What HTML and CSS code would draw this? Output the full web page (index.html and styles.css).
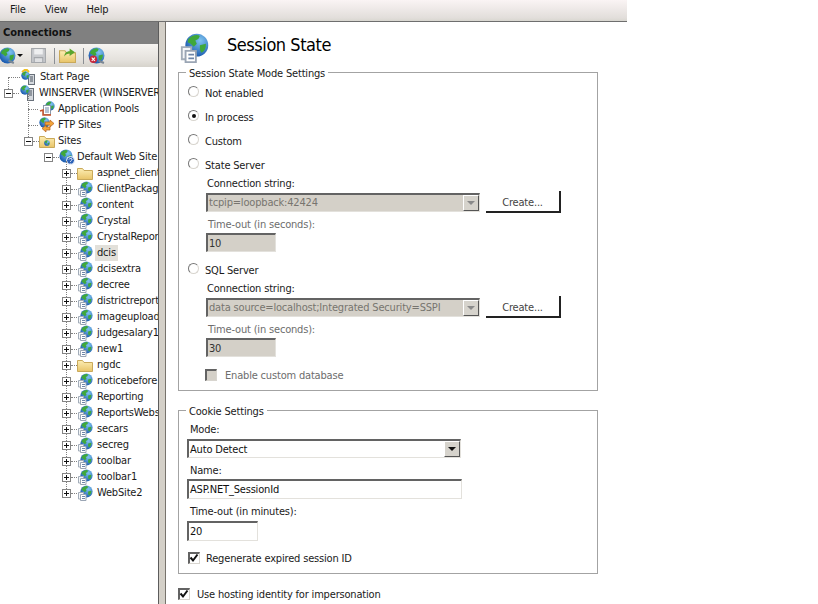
FILE: index.html
```html
<!DOCTYPE html>
<html lang="en">
<head>
    <meta charset="UTF-8">
    <title>Session State</title>
    <link rel="stylesheet" href="styles.css">
</head>
<body>
    <!-- shared icons -->
    <svg class="icon-defs" aria-hidden="true">
        <defs>
            <radialGradient id="sea" cx="0.65" cy="0.3" r="0.8">
                <stop offset="0" stop-color="#7fc4f0"/>
                <stop offset="1" stop-color="#0f4fa8"/>
            </radialGradient>
            <linearGradient id="manila" x1="0" y1="0" x2="0" y2="1">
                <stop offset="0" stop-color="#fdeeb4"/>
                <stop offset="1" stop-color="#e8c468"/>
            </linearGradient>
            <symbol id="globe" viewBox="0 0 16 16">
                <circle cx="8" cy="8" r="7.5" fill="url(#sea)"/>
                <path d="M5 2c2-1 4-1 5 0l-1 2-2 1 1 2-2 2-2-2-2-1c0-2 1-3 3-4z" fill="#3fa83a"/>
                <path d="M10 8l4-1c0 3-1 5-3 6l-1-2z" fill="#3fa83a"/>
            </symbol>
            <symbol id="site" viewBox="0 0 16 16">
                <use href="#globe" x="3" y="0" width="13" height="13"/>
                <path d="M1.500 7.500h5v6.500h-5z" fill="#f4f6f8" stroke="#a3adb9"/>
                <path d="M3.500 9.500h5.500v6h-5.500z" fill="#fff" stroke="#9aa5b4"/>
                <path d="M5 11.500h3M5 13.500h3" stroke="#6f86a8"/>
            </symbol>
            <symbol id="folder" viewBox="0 0 16 16">
                <path d="M.5 3.500h5l1.500 2h8.500v9h-15z" fill="url(#manila)" stroke="#c9a95a"/>
            </symbol>
            <symbol id="server" viewBox="0 0 16 16">
                <rect x="8.500" y="3.500" width="6" height="12" fill="#d5d9de" stroke="#68707a"/>
                <path d="M10 6h3M10 8h3M10 10h3" stroke="#4b5560"/>
                <use href="#globe" x="1" y="0" width="10" height="10"/>
            </symbol>
            <symbol id="homepage" viewBox="0 0 16 16">
                <rect x="8.500" y="5.500" width="6" height="10" fill="#d5d9de" stroke="#68707a"/>
                <path d="M10 8h3M10 10h3M10 12h3" stroke="#4b5560"/>
                <use href="#globe" x="1" y="2" width="9" height="9"/>
                <path d="M2 3l4-3 3 3" fill="none" stroke="#f0c020" stroke-width="2"/>
            </symbol>
            <symbol id="pools" viewBox="0 0 16 16">
                <use href="#globe" x="6" y="0" width="10" height="10"/>
                <rect x="4.500" y="4.500" width="7" height="9" fill="#fff" stroke="#8a97a8"/>
                <path d="M6 7h4M6 9h4M6 11h4" stroke="#6f86a8"/>
                <path d="M1 10l3-1v5h8" fill="none" stroke="#c8522a" stroke-width="1.500"/>
            </symbol>
            <symbol id="ftp" viewBox="0 0 16 16">
                <use href="#globe" x="0" y="0" width="11" height="11"/>
                <path d="M6 5h5V3l4 3.500-4 3.500V8H6z" fill="#f2a53a" stroke="#b5601c" stroke-width=".7"/>
                <path d="M10 9H6V7L2 10.500 6 14v-2h4z" fill="#f2a53a" stroke="#b5601c" stroke-width=".7" transform="translate(1 1)"/>
            </symbol>
            <symbol id="sites" viewBox="0 0 16 16">
                <path d="M.5 3.500h5l1.500 2h8.500v9h-15z" fill="url(#manila)" stroke="#c9a95a"/>
                <use href="#globe" x="5" y="7" width="6" height="6"/>
            </symbol>
            <symbol id="webroot" viewBox="0 0 16 16">
                <use href="#globe" width="14" height="14"/>
                <circle cx="11.500" cy="11.500" r="4" fill="#2c62b8" stroke="#fff"/>
                <path d="M10 10.500c.5-1.500 3-1.500 3 0 0 1-1.500 1-1.500 2.200M11.500 14v.5" fill="none" stroke="#fff"/>
            </symbol>
        </defs>
    </svg>

    <div class="app">
        <nav class="menu-bar">
            <span>File</span>
            <span>View</span>
            <span>Help</span>
        </nav>

        <div class="panes">
            <aside class="connections">
                <h2 class="pane-title">Connections</h2>
                <div class="toolbar">
                    <svg class="tool-icon" viewBox="0 0 16 16"><use href="#globe"/><path d="M9 13l5 2" stroke="#7b8794" stroke-width="2"/></svg>
                    <span class="drop-arrow"></span>
                    <svg class="tool-icon save" viewBox="0 0 16 16">
                        <path d="M1.500 1.500h13v13h-13z" fill="#c9cbce" stroke="#a4a7ab"/>
                        <path d="M4 2h8v5H4z" fill="#eeeff0"/>
                        <path d="M4 10h8v4.500H4z" fill="#dfe0e2" stroke="#a4a7ab"/>
                    </svg>
                    <span class="tool-sep"></span>
                    <svg class="tool-icon" viewBox="0 0 16 16">
                        <use href="#folder"/>
                        <path d="M5 9c0-3 2-5 5-5V1.500L15 5l-5 3.500V6c-2 0-4 1-5 3z" fill="#5aa62e"/>
                    </svg>
                    <span class="tool-sep"></span>
                    <svg class="tool-icon" viewBox="0 0 16 16">
                        <use href="#globe"/>
                        <circle cx="5" cy="11.500" r="3.500" fill="#c8283c"/>
                        <path d="M3.500 10l3 3m0-3l-3 3" stroke="#fff"/>
                        <path d="M10 13l5 2" stroke="#7b8794" stroke-width="2"/>
                    </svg>
                </div>

                <div class="tree">
                    <div class="node lvl-0 top-leaf"><svg class="node-icon"><use href="#homepage"/></svg><span class="node-label">Start Page</span></div>
                    <div class="node lvl-0"><span class="expander open"></span><svg class="node-icon"><use href="#server"/></svg><span class="node-label">WINSERVER (WINSERVER)</span></div>
                    <div class="branch branch-server">
                        <div class="node lvl-1 leaf"><svg class="node-icon"><use href="#pools"/></svg><span class="node-label">Application Pools</span></div>
                        <div class="node lvl-1 leaf"><svg class="node-icon"><use href="#ftp"/></svg><span class="node-label">FTP Sites</span></div>
                        <div class="node lvl-1"><span class="expander open"></span><svg class="node-icon"><use href="#sites"/></svg><span class="node-label">Sites</span></div>
                    </div>
                    <div class="node lvl-2"><span class="expander open"></span><svg class="node-icon"><use href="#webroot"/></svg><span class="node-label">Default Web Site</span></div>
                    <div class="branch branch-root">
                        <div class="node lvl-3"><span class="expander"></span><svg class="node-icon"><use href="#folder"/></svg><span class="node-label">aspnet_client</span></div>
                        <div class="node lvl-3"><span class="expander"></span><svg class="node-icon"><use href="#site"/></svg><span class="node-label">ClientPackages</span></div>
                        <div class="node lvl-3"><span class="expander"></span><svg class="node-icon"><use href="#site"/></svg><span class="node-label">content</span></div>
                        <div class="node lvl-3"><span class="expander"></span><svg class="node-icon"><use href="#site"/></svg><span class="node-label">Crystal</span></div>
                        <div class="node lvl-3"><span class="expander"></span><svg class="node-icon"><use href="#site"/></svg><span class="node-label">CrystalReports</span></div>
                        <div class="node lvl-3"><span class="expander"></span><svg class="node-icon"><use href="#site"/></svg><span class="node-label selected">dcis</span></div>
                        <div class="node lvl-3"><span class="expander"></span><svg class="node-icon"><use href="#site"/></svg><span class="node-label">dcisextra</span></div>
                        <div class="node lvl-3"><span class="expander"></span><svg class="node-icon"><use href="#site"/></svg><span class="node-label">decree</span></div>
                        <div class="node lvl-3"><span class="expander"></span><svg class="node-icon"><use href="#site"/></svg><span class="node-label">districtreports</span></div>
                        <div class="node lvl-3"><span class="expander"></span><svg class="node-icon"><use href="#site"/></svg><span class="node-label">imageupload</span></div>
                        <div class="node lvl-3"><span class="expander"></span><svg class="node-icon"><use href="#site"/></svg><span class="node-label">judgesalary1</span></div>
                        <div class="node lvl-3"><span class="expander"></span><svg class="node-icon"><use href="#site"/></svg><span class="node-label">new1</span></div>
                        <div class="node lvl-3"><span class="expander"></span><svg class="node-icon"><use href="#folder"/></svg><span class="node-label">ngdc</span></div>
                        <div class="node lvl-3"><span class="expander"></span><svg class="node-icon"><use href="#site"/></svg><span class="node-label">noticebefore</span></div>
                        <div class="node lvl-3"><span class="expander"></span><svg class="node-icon"><use href="#site"/></svg><span class="node-label">Reporting</span></div>
                        <div class="node lvl-3"><span class="expander"></span><svg class="node-icon"><use href="#site"/></svg><span class="node-label">ReportsWebsite</span></div>
                        <div class="node lvl-3"><span class="expander"></span><svg class="node-icon"><use href="#site"/></svg><span class="node-label">secars</span></div>
                        <div class="node lvl-3"><span class="expander"></span><svg class="node-icon"><use href="#site"/></svg><span class="node-label">secreg</span></div>
                        <div class="node lvl-3"><span class="expander"></span><svg class="node-icon"><use href="#site"/></svg><span class="node-label">toolbar</span></div>
                        <div class="node lvl-3"><span class="expander"></span><svg class="node-icon"><use href="#site"/></svg><span class="node-label">toolbar1</span></div>
                        <div class="node lvl-3"><span class="expander"></span><svg class="node-icon"><use href="#site"/></svg><span class="node-label">WebSite2</span></div>
                    </div>
                </div>
            </aside>

            <main class="content">
                <header class="page-head">
                    <svg class="page-icon"><use href="#site"/></svg>
                    <h1>Session State</h1>
                </header>

                <fieldset class="group mode-group">
                    <legend>Session State Mode Settings</legend>

                    <div class="option"><span class="radio"></span>Not enabled</div>
                    <div class="option"><span class="radio checked"></span>In process</div>
                    <div class="option"><span class="radio"></span>Custom</div>
                    <div class="option"><span class="radio"></span>State Server</div>
                    <div class="sub">
                        <div class="field-label">Connection string:</div>
                        <div class="combo-row">
                            <div class="combo disabled">tcpip=loopback:42424<span class="combo-btn"></span></div>
                            <div class="button">Create...</div>
                        </div>
                        <div class="field-label muted timeout-label">Time-out (in seconds):</div>
                        <div class="textbox short disabled">10</div>
                    </div>

                    <div class="option sql-option"><span class="radio"></span>SQL Server</div>
                    <div class="sub">
                        <div class="field-label">Connection string:</div>
                        <div class="combo-row">
                            <div class="combo disabled">data source=localhost;Integrated Security=SSPI<span class="combo-btn"></span></div>
                            <div class="button">Create...</div>
                        </div>
                        <div class="field-label muted timeout-label">Time-out (in seconds):</div>
                        <div class="textbox short disabled">30</div>
                        <div class="check-row custom-db muted"><span class="check disabled"></span>Enable custom database</div>
                    </div>
                </fieldset>

                <fieldset class="group cookie-group">
                    <legend>Cookie Settings</legend>

                    <div class="field-label">Mode:</div>
                    <div class="combo wide">Auto Detect<span class="combo-btn"></span></div>
                    <div class="field-label next">Name:</div>
                    <div class="textbox wide">ASP.NET_SessionId</div>
                    <div class="field-label next">Time-out (in minutes):</div>
                    <div class="textbox short gap-top">20</div>
                    <div class="check-row regen">
                        <span class="check"><svg viewBox="0 0 10 10"><path d="M1.500 4.500l2.500 3 4.500-6" fill="none" stroke="#111" stroke-width="2"/></svg></span>Regenerate expired session ID
                    </div>
                </fieldset>

                <div class="check-row hosting">
                    <span class="check"><svg viewBox="0 0 10 10"><path d="M1.500 4.500l2.500 3 4.500-6" fill="none" stroke="#111" stroke-width="2"/></svg></span>Use hosting identity for impersonation
                </div>
            </main>
        </div>
    </div>
</body>
</html>
```

FILE: styles.css
```css
* {
    margin: 0;
    padding: 0;
    box-sizing: border-box;
}

body {
    font-family: "DejaVu Sans Condensed", "DejaVu Sans", sans-serif;
    font-stretch: condensed;
    font-size: 11px;
    letter-spacing: -0.18px;
    color: #1a1a1a;
    background: #fff;
    height: 604px;
    overflow: hidden;
}

.icon-defs {
    width: 0;
    height: 0;
    display: block;
}

.app {
    width: 627px;
    height: 604px;
    display: flex;
    flex-direction: column;
}

.menu-bar {
    height: 22px;
    flex: none;
    display: flex;
    gap: 19px;
    padding: 2px 0 0 10px;
    background: linear-gradient(#faf4f4, #e2dedb 85%, #d8d6d0);
    border-bottom: 1px solid #6e6e6e;
    font-size: 11px;
    line-height: 15px;
}

.panes {
    flex: 1;
    display: flex;
    min-height: 0;
}

/* left pane */
.connections {
    width: 166px;
    flex: none;
    border-right: 1px solid #77736c;
    background: #fff;
    overflow: hidden;
    position: relative;
}

.connections::after {
    content: '';
    position: absolute;
    top: 0;
    bottom: 0;
    left: 158px;
    width: 7px;
    background: #d4d0c8;
    border-left: 1px solid #5c5c5c;
}

.pane-title {
    height: 22px;
    background: #808080;
    color: #111;
    font-size: 11px;
    font-weight: bold;
    letter-spacing: 0;
    line-height: 21px;
    padding-left: 3px;
}

.toolbar {
    height: 23px;
    display: flex;
    align-items: center;
    background: linear-gradient(#f6f4f1, #e4e1dc 70%, #d6d3cc);
}

.tool-icon {
    width: 17px;
    height: 17px;
    flex: none;
}

.tool-icon:first-child {
    margin-left: -1px;
}

.tool-icon.save {
    margin-left: 7px;
}

.drop-arrow {
    width: 0;
    height: 0;
    margin-left: 1px;
    border: 3px solid transparent;
    border-top: 3px solid #111;
    border-bottom: 0;
}

.tool-sep {
    width: 1px;
    height: 16px;
    margin: 0 4px 0 7px;
    background: #8b8f94;
}

.tree {
    padding-top: 2px;
    width: 158px;
    overflow: hidden;
}

.node {
    height: 16px;
    display: flex;
    align-items: center;
    white-space: nowrap;
    position: relative;
}

.lvl-0 { padding-left: 4px; }
.lvl-1 { padding-left: 24px; }
.lvl-2 { padding-left: 44px; }
.lvl-3 { padding-left: 62px; }

.expander {
    width: 9px;
    height: 9px;
    flex: none;
    border: 1px solid #848484;
    background: linear-gradient(#111, #111) center / 5px 1px no-repeat, #fff;
    position: relative;
}

.expander:not(.open) {
    background:
        linear-gradient(#111, #111) center / 5px 1px no-repeat,
        linear-gradient(#111, #111) center / 1px 5px no-repeat,
        #fff;
}

/* dotted stub between expander and icon */
.expander::after {
    content: '';
    position: absolute;
    left: 8px;
    top: 3px;
    width: 6px;
    border-top: 1px dotted #808080;
}

.node-icon {
    width: 16px;
    height: 16px;
    flex: none;
    margin-left: 6px;
    position: relative;
}

.node-label {
    margin-left: 3px;
    padding: 0 1px;
    line-height: 16px;
}

.lvl-1 .node-label { margin-left: 2px; }
.lvl-2 .node-label { margin-left: 1px; }

.node-label.selected {
    background: #e2e0da;
    padding: 0 2px;
    margin-left: 2px;
}

.top-leaf {
    padding-left: 14px;
}

.top-leaf::before,
.leaf::before {
    content: '';
    position: absolute;
    top: 8px;
    border-top: 1px dotted #808080;
}

.top-leaf::before {
    left: 8px;
    width: 12px;
}

.top-leaf + .node::before {
    content: '';
    position: absolute;
    left: 8px;
    top: -8px;
    height: 12px;
    border-left: 1px dotted #808080;
}

.leaf {
    padding-left: 33px;
}

.leaf::before {
    left: 28px;
    width: 10px;
}

.branch {
    position: relative;
}

.branch::before {
    content: '';
    position: absolute;
    border-left: 1px dotted #808080;
}

.branch-server::before {
    left: 28px;
    top: -8px;
    bottom: 12px;
}

.branch-root::before {
    left: 66px;
    top: -4px;
    bottom: 8px;
}

/* right pane */
.content {
    flex: 1;
    padding-left: 12px;
    min-width: 0;
    overflow: hidden;
}

.page-head {
    height: 41px;
    display: flex;
    align-items: flex-start;
    position: relative;
}

.page-icon {
    width: 30px;
    height: 30px;
    position: absolute;
    left: 1px;
    top: 11px;
}

.page-head h1 {
    font-size: 18px;
    font-weight: normal;
    letter-spacing: -0.45px;
    line-height: 22px;
    margin: 12px 0 0 49px;
    color: #000;
}

.group {
    width: 420px;
    border: 1px solid #a3a3a3;
    min-width: 0;
}

.group legend {
    padding: 4px 3px 0;
    line-height: 14px;
}

.mode-group {
    padding: 0 0 7px 9px;
}

.mode-group legend {
    margin-left: -2px;
}

.cookie-group {
    margin-top: 10px;
    padding: 3px 0 8px 8px;
}

.cookie-group legend {
    margin-left: -1px;
}

.option {
    height: 24px;
    display: flex;
    align-items: center;
}

.radio {
    width: 11px;
    height: 11px;
    flex: none;
    margin: -3px 6px 0 0;
    border-radius: 50%;
    border: 1px solid;
    border-color: #777 #d8d5cf #d8d5cf #777;
    background: #fff;
    position: relative;
}

.radio.checked::after {
    content: '';
    position: absolute;
    top: 3px;
    left: 3px;
    width: 4px;
    height: 4px;
    border-radius: 50%;
    background: #111;
}

.sub {
    padding-left: 18px;
    margin-top: -1px;
}

.field-label {
    line-height: 16px;
    margin-bottom: -2px;
    padding-left: 1px;
}

.cookie-group .field-label {
    padding-left: 3px;
}

.cookie-group .next {
    margin-top: 5px;
}

.muted {
    color: #6d6d6d;
}

.timeout-label {
    margin-top: 4px;
    padding-left: 2px;
}

.combo-row {
    display: flex;
    align-items: center;
    height: 22px;
    margin-top: 1px;
    gap: 6px;
}

.combo,
.textbox {
    height: 19px;
    width: 274px;
    flex: none;
    display: flex;
    align-items: center;
    justify-content: space-between;
    white-space: nowrap;
    border: 2px solid;
    border-color: #636363 #e3e1dc #e3e1dc #636363;
    border-width: 2px 1px 1px 2px;
    padding-left: 1px;
    background: #fff;
    color: #111;
}

.disabled {
    background: #d4d0c8;
    color: #77756f;
}

.cookie-group .combo {
    margin-top: 3px;
    padding-right: 0;
}

.combo-btn {
    width: 16px;
    height: 16px;
    flex: none;
    background: #d6d3cc;
    border: 1px solid;
    border-color: #fff #555 #555 #fff;
    position: relative;
}

.combo-btn::after {
    content: '';
    position: absolute;
    top: 5px;
    left: 3px;
    border: 4px solid transparent;
    border-top: 4px solid #111;
    border-bottom: 0;
}

.disabled .combo-btn::after {
    border-top-color: #8a8a8a;
}

.button {
    width: 75px;
    height: 22px;
    flex: none;
    border-right: 2px solid #222;
    border-bottom: 2px solid #222;
    text-align: center;
    line-height: 23px;
    color: #444;
}

.textbox {
    margin-top: 2px;
    color: #111;
}

.textbox.disabled {
    background: #d4d0c8;
    color: #333;
}

.textbox.wide {
    width: 275px;
    height: 20px;
}

.textbox.short {
    width: 70px;
}

.gap-top {
    margin-top: 3px;
    height: 20px !important;
    width: 71px !important;
}

.sql-option {
    margin-top: 6px;
}

.check-row {
    display: flex;
    align-items: center;
    line-height: 16px;
    margin-bottom: -2px;
}

.check {
    width: 12px;
    height: 12px;
    flex: none;
    border: 1px solid;
    border-width: 2px 1px 1px 2px;
    border-color: #636363 #d8d5cf #d8d5cf #636363;
    margin-top: -2px;
    margin-right: 7px;
    background: #fff;
    display: block;
}

.check svg {
    display: block;
    width: 10px;
    height: 10px;
    margin: -1px 0 0 -1px;
}

.check.disabled {
    background: #d4d0c8;
    margin-left: -1px;
    margin-right: 8px;
}

.custom-db {
    margin-top: 11px;
    padding-bottom: 1px;
}

.regen {
    margin-top: 10px;
    margin-left: 1px;
}

.regen .check {
    margin-right: 6px;
}

.hosting {
    margin-top: 13px;
}
```
